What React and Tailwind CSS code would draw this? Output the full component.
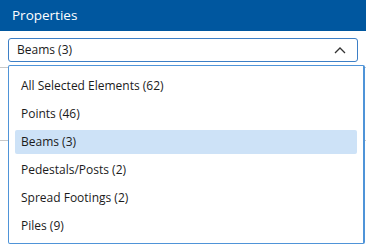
import React from 'react';

const items = [
  'All Selected Elements (62)',
  'Points (46)',
  'Beams (3)',
  'Pedestals/Posts (2)',
  'Spread Footings (2)',
  'Piles (9)',
];

const ChevronUp = () => (
  <svg width="12" height="8" viewBox="0 0 12 8" fill="none">
    <path d="M1 7 L6 2 L11 7" stroke="#333" strokeWidth="1.3" />
  </svg>
);

export default function App() {
  const selected = 'Beams (3)';
  return (
    <div className="relative w-[366px] h-[247px] bg-white overflow-hidden font-['Segoe_UI','Open_Sans',sans-serif] text-[12px] text-[#1b1b1b]">
      <div className="h-[31px] bg-[#00579f] flex items-center px-3">
        <h2 className="text-white text-[13.5px] leading-none">Properties</h2>
      </div>

      <div className="px-2 pt-[7px]">
        <button className="w-full h-[24px] flex items-center justify-between pl-2 pr-[11px] border border-[#3d7fc6] rounded-[3px] bg-white">
          <span>{selected}</span>
          <ChevronUp />
        </button>
      </div>

      {/* content underneath the open list */}
      <div className="mt-[5px] border-t border-[#c8c8c8]" />
      <div className="mt-[72px] border-t border-[#c8c8c8]" />

      <div className="absolute left-2 top-[65px] w-[357px] h-[179px] bg-white border border-[#4f94d8] border-r-2 rounded-[2px] pt-[6px] px-[6px]">
        {items.map((item) => (
          <div key={item} className="h-[28px] flex items-center">
            <div
              className={`w-full h-[24px] flex items-center px-[6px] rounded-[2px] ${
                item === selected ? 'bg-[#cde2f7]' : ''
              }`}
            >
              {item}
            </div>
          </div>
        ))}
      </div>
    </div>
  );
}
